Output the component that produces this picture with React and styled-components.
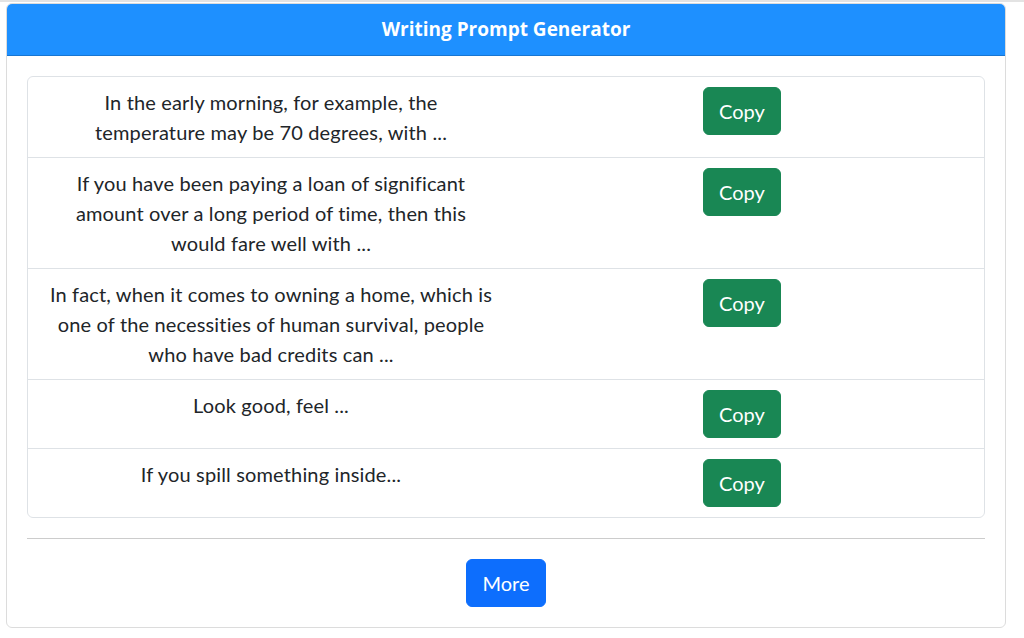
import React from "react";
import styled, { createGlobalStyle } from "styled-components";

const Global = createGlobalStyle`
  html, body { margin: 0; padding: 0; background: #fff; }
  body {
    font-family: Lato, "Noto Sans", sans-serif;
    color: #212529;
  }
  * { box-sizing: border-box; }
`;

const TopRule = styled.div`
  height: 3px;
  border-top: 2px solid #e3e3e3;
`;

const Page = styled.div`
  padding: 0 18px 0 6px;
`;

const Card = styled.div`
  width: 1000px;
  border: 1px solid #dcdcdc;
  border-radius: 6px;
  overflow: hidden;
  background: #fff;
`;

const CardHeader = styled.div`
  background: #1e90ff;
  color: #fff;
  font-family: "Open Sans", Lato, sans-serif;
  font-weight: 700;
  font-size: 19px;
  line-height: 27px;
  text-align: center;
  padding: 12px 16px;
  border-bottom: 1px solid rgba(0, 0, 0, 0.175);
`;

const CardBody = styled.div`
  padding: 20px;
  display: flex;
  flex-direction: column;
  align-items: stretch;
`;

const List = styled.div`
  border: 1px solid #dee2e6;
  border-radius: 6px;
`;

const Row = styled.div`
  display: grid;
  grid-template-columns: 486px 1fr;
  align-items: start;
  padding: 10px 0;
  & + & {
    border-top: 1px solid #dee2e6;
  }
`;

const PromptText = styled.p`
  margin: 0;
  padding: 0 21px;
  font-size: 20px;
  line-height: 30px;
  letter-spacing: 0.15px;
  text-align: center;
`;

const ActionCell = styled.div`
  display: flex;
  justify-content: center;
  padding-right: 14px;
`;

const Button = styled.button`
  font-family: inherit;
  font-size: 20px;
  line-height: 30px;
  padding: 8px 0;
  border: 1px solid ${(p) => p.$bg};
  background: ${(p) => p.$bg};
  color: #fff;
  border-radius: 6px;
  cursor: pointer;
  width: ${(p) => p.$width}px;
  text-align: center;
`;

const Divider = styled.hr`
  margin: 20px 0;
  border: 0;
  border-top: 1px solid #cccccc;
`;

const Footer = styled.div`
  display: flex;
  justify-content: center;
`;

const prompts = [
  "In the early morning, for example, the temperature may be 70 degrees, with ...",
  "If you have been paying a loan of significant amount over a long period of time, then this would fare well with ...",
  "In fact, when it comes to owning a home, which is one of the necessities of human survival, people who have bad credits can ...",
  "Look good, feel ...",
  "If you spill something inside...",
];

export default function App() {
  return (
    <>
      <Global />
      <TopRule />
      <Page>
        <Card>
          <CardHeader>Writing Prompt Generator</CardHeader>
          <CardBody>
            <List>
              {prompts.map((t, i) => (
                <Row key={i}>
                  <PromptText>{t}</PromptText>
                  <ActionCell>
                    <Button $bg="#198754" $width={78}>Copy</Button>
                  </ActionCell>
                </Row>
              ))}
            </List>
            <Divider />
            <Footer>
              <Button $bg="#0d6efd" $width={80}>More</Button>
            </Footer>
          </CardBody>
        </Card>
      </Page>
    </>
  );
}
